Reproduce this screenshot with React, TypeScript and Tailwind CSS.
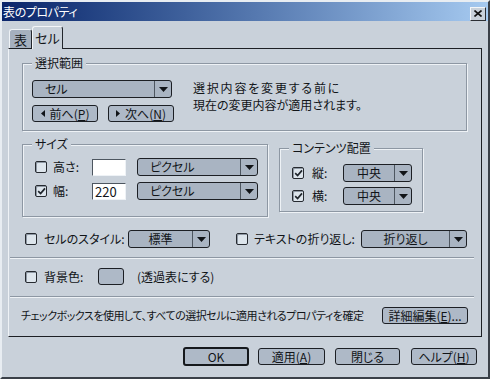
import React from 'react';

function Check({ on }: { on?: boolean }): React.ReactElement {
  return (
    <span className="flex h-[12px] w-[12px] shrink-0 items-center justify-center rounded-[2px] border border-[#262a30] bg-[#dde5ec] shadow-[inset_1px_1px_0_#8e98a4]">
      {on ? (
        <svg width="9" height="8" viewBox="0 0 9 8">
          <path d="M1.2 4.2 L3.6 6.6 L8 1.4" fill="none" stroke="#1f252c" strokeWidth="1.7" />
        </svg>
      ) : null}
    </span>
  );
}

function Arrow(): React.ReactElement {
  return (
    <svg width="9" height="5" viewBox="0 0 9 5">
      <path d="M0 0H9L4.5 5Z" fill="#111418" />
    </svg>
  );
}

function Select({
  w,
  text,
  center,
}: {
  w: string;
  text: string;
  center?: boolean;
}): React.ReactElement {
  return (
    <div className={`flex h-[18px] shrink-0 items-stretch rounded-[3px] border border-[#1c1f24] bg-[#a9b4c2] ${w}`}>
      <span className={`flex flex-1 items-center leading-none ${center ? 'justify-center' : 'pl-[12px]'}`}>
        {text}
      </span>
      <span className="flex w-[17px] items-center justify-center border-l border-[#4d5660]">
        <Arrow />
      </span>
    </div>
  );
}

function Btn({
  w,
  children,
  def,
}: {
  w: string;
  children: React.ReactNode;
  def?: boolean;
}): React.ReactElement {
  return (
    <div
      className={`flex shrink-0 items-center justify-center rounded-[3px] bg-[#aeb9c7] leading-none ${
        def ? 'h-[19px] border-2 border-[#15181c]' : 'h-[17px] border border-[#1c1f24]'
      } ${w}`}
    >
      {children}
    </div>
  );
}

function Group({
  title,
  className,
  children,
}: {
  title: string;
  className: string;
  children: React.ReactNode;
}): React.ReactElement {
  return (
    <div
      className={`relative shrink-0 border border-[#8d97a3] shadow-[inset_1px_1px_0_#eef2f6,1px_1px_0_#eef2f6] ${className}`}
    >
      <span className="absolute top-[-9px] left-[9px] bg-[#c9d1da] px-[3px] leading-[16px]">{title}</span>
      {children}
    </div>
  );
}

function Sep(): React.ReactElement {
  return <div className="ml-[1px] h-[2px] w-[464px] border-t border-b border-t-[#8d97a3] border-b-[#eef2f6]" />;
}

export default function App(): React.ReactElement {
  return (
    <div className="flex h-[379px] w-[490px] flex-col border-2 border-t-[#e8edf2] border-r-[#3a4048] border-b-[#3a4048] border-l-[#e8edf2] bg-[#c9d1da] font-['Noto_Sans_CJK_JP',sans-serif] text-[12px] whitespace-nowrap text-[#111418] [font-feature-settings:'palt']">
      {/* title bar */}
      <div className="flex h-[19px] shrink-0 items-center justify-between bg-linear-to-r from-[#0a246a] to-[#a6caf0] pr-[2px] pl-[1px]">
        <span className="text-[12px] leading-none tracking-[-0.4px] text-white">表のプロパティ</span>
        <span className="mt-[4px] flex h-[14px] w-[16px] items-center justify-center border border-t-[#f4f6f8] border-r-[#2a2e34] border-b-[#2a2e34] border-l-[#f4f6f8] bg-[#c9d1da]">
          <svg width="8" height="7" viewBox="0 0 8 7">
            <path d="M0.5 0.5 L7.5 6.5 M7.5 0.5 L0.5 6.5" stroke="#111" strokeWidth="1.6" />
          </svg>
        </span>
      </div>

      {/* tabs */}
      <div className="mt-[5px] ml-[7px] flex h-[22px] shrink-0 items-end">
        <div className="flex h-[19px] w-[23px] items-center justify-center rounded-t-[3px] border border-b-0 border-t-[#eef2f6] border-r-[#22262c] border-l-[#eef2f6] bg-[#a5b0be] text-[13px] leading-none">
          表
        </div>
        <div className="relative z-10 -mb-[1px] flex h-[23px] w-[31px] items-center justify-center rounded-t-[3px] border border-b-0 border-t-[#f4f6f8] border-r-[#22262c] border-l-[#f4f6f8] bg-[#c9d1da] pb-[2px] text-[13px] leading-none">
          セル
        </div>
      </div>

      {/* panel */}
      <div className="ml-[6px] flex h-[289px] w-[474px] shrink-0 flex-col border border-t-[#1c1f24] border-r-[#1c1f24] border-b-[#1c1f24] border-l-[#eef2f6]">
        <Group title="選択範囲" className="mt-[14px] ml-[13px] h-[68px] w-[445px]">
          <div className="mt-[16px] ml-[9px] flex">
            <div className="flex flex-col">
              <Select w="w-[140px]" text="セル" />
              <div className="mt-[7px] flex gap-[10px]">
                <Btn w="w-[66px]">
                  <svg width="4" height="7" viewBox="0 0 4 7" className="mr-[5px]">
                    <path d="M4 0V7L0 3.5Z" fill="#111418" />
                  </svg>
                  前へ(<span className="underline">P</span>)
                </Btn>
                <Btn w="w-[66px]">
                  <svg width="4" height="7" viewBox="0 0 4 7" className="mr-[5px]">
                    <path d="M0 0V7L4 3.5Z" fill="#111418" />
                  </svg>
                  次へ(<span className="underline">N</span>)
                </Btn>
              </div>
            </div>
            <div className="-mt-[1px] ml-[19px] flex flex-col leading-[17px]">
              <span className="tracking-[1.8px]">選択内容を変更する前に</span>
              <span>現在の変更内容が適用されます。</span>
            </div>
          </div>
        </Group>

        <div className="mt-[13px] ml-[13px] flex items-start">
          <Group title="サイズ" className="h-[73px] w-[246px]">
            <div className="mt-[13px] ml-[12px] flex flex-col gap-[6px]">
              <div className="flex h-[18px] items-center">
                <Check />
                <span className="ml-[6px] w-[39px] leading-none">高さ:</span>
                <div className="h-[17px] w-[34px] border border-t-[#4d5660] border-r-[#eef2f6] border-b-[#eef2f6] border-l-[#4d5660] bg-white" />
                <div className="ml-[11px]">
                  <Select w="w-[121px]" text="ピクセル" />
                </div>
              </div>
              <div className="flex h-[18px] items-center">
                <Check on />
                <span className="ml-[6px] w-[39px] leading-none">幅:</span>
                <div className="flex h-[17px] w-[34px] items-center border border-t-[#4d5660] border-r-[#eef2f6] border-b-[#eef2f6] border-l-[#4d5660] bg-white pl-[2px] text-[13px] leading-none">
                  220
                </div>
                <div className="ml-[11px]">
                  <Select w="w-[121px]" text="ピクセル" />
                </div>
              </div>
            </div>
          </Group>

          <Group title="コンテンツ配置" className="mt-[4px] ml-[11px] h-[64px] w-[144px]">
            <div className="mt-[15px] ml-[12px] flex flex-col gap-[5px]">
              <div className="flex h-[18px] items-center">
                <Check on />
                <span className="ml-[8px] w-[31px] leading-none">縦:</span>
                <Select w="w-[69px]" text="中央" center />
              </div>
              <div className="flex h-[18px] items-center">
                <Check on />
                <span className="ml-[8px] w-[31px] leading-none">横:</span>
                <Select w="w-[69px]" text="中央" center />
              </div>
            </div>
          </Group>
        </div>

        <div className="mt-[13px] ml-[16px] flex h-[18px] items-center">
          <Check />
          <span className="ml-[7px] w-[84px] leading-none">セルのスタイル:</span>
          <Select w="w-[82px]" text="標準" center />
          <div className="ml-[26px]">
            <Check />
          </div>
          <span className="ml-[6px] w-[107px] leading-none">テキストの折り返し:</span>
          <Select w="w-[106px]" text="折り返し" center />
        </div>

        <div className="mt-[9px]">
          <Sep />
        </div>

        <div className="mt-[9px] ml-[16px] flex h-[17px] items-center">
          <Check />
          <span className="ml-[7px] w-[54px] leading-none">背景色:</span>
          <div className="h-[17px] w-[26px] rounded-[3px] border border-[#1c1f24] bg-[#aeb9c7]" />
          <span className="ml-[13px] leading-none">(透過表にする)</span>
        </div>

        <div className="mt-[11px]">
          <Sep />
        </div>

        <div className="mt-[9px] ml-[12px] flex items-center">
          <span className="w-[361px] text-[11px] leading-none tracking-[-0.5px]">
            チェックボックスを使用して、すべての選択セルに適用されるプロパティを確定
          </span>
          <Btn w="w-[86px]">
            詳細編集(<span className="underline">E</span>)...
          </Btn>
        </div>
      </div>

      {/* bottom buttons */}
      <div className="mt-[10px] ml-[181px] flex items-center">
        <Btn w="w-[66px]" def>
          OK
        </Btn>
        <div className="ml-[9px]">
          <Btn w="w-[67px]">
            適用(<span className="underline">A</span>)
          </Btn>
        </div>
        <div className="ml-[10px]">
          <Btn w="w-[65px]">閉じる</Btn>
        </div>
        <div className="ml-[11px]">
          <Btn w="w-[66px]">
            ヘルプ(<span className="underline">H</span>)
          </Btn>
        </div>
      </div>
    </div>
  );
}
